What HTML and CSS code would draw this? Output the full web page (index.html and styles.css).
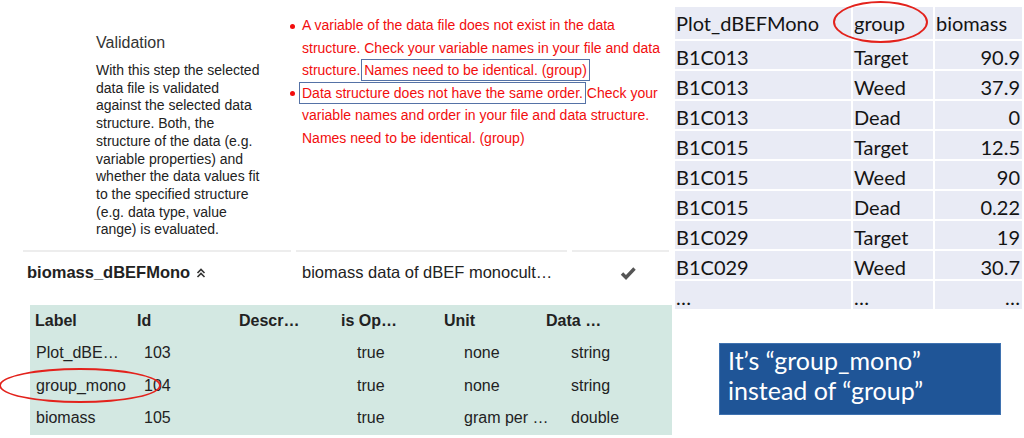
FILE: index.html
```html
<!DOCTYPE html>
<html lang="en">
<head>
<meta charset="utf-8">
<title>Validation</title>
<link rel="stylesheet" href="styles.css">
</head>
<body>
<div class="slide">
  <section class="webpage">
    <div class="validation">
      <div class="step-info">
        <h2 class="step-title">Validation</h2>
        <p class="step-text">With this step the selected data file is validated against the selected data structure. Both, the structure of the data (e.g. variable properties) and whether the data values fit to the specified structure (e.g. data type, value range) is evaluated.</p>
      </div>
      <ul class="errors">
        <li>A variable of the data file does not exist in the data structure. Check your variable names in your file and data structure. <span class="mark">Names need to be identical. (group)</span></li>
        <li><span class="mark">Data structure does not have the same order.</span> Check your variable names and order in your file and data structure. Names need to be identical. (group)</li>
      </ul>
    </div>
    <div class="dataset-row">
      <div class="cell name">biomass_dBEFMono
        <svg class="chev" width="10" height="10" viewBox="0 0 10 10"><polyline points="1.5,5 5,1.5 8.5,5" /><polyline points="1.5,9 5,5.5 8.5,9" /></svg>
      </div>
      <div class="cell desc">biomass data of dBEF monocult…</div>
      <div class="cell status">
        <svg class="check" width="16" height="14" viewBox="0 0 16 14"><polyline points="2,7.5 6,11.5 14.5,2.5" /></svg>
      </div>
    </div>
    <div class="vars">
      <div class="vars-grid">
        <div class="vh">Label</div>
        <div class="vh">Id</div>
        <div class="vh">Descr…</div>
        <div class="vh">is Op…</div>
        <div class="vh">Unit</div>
        <div class="vh">Data …</div>

        <div class="vc c1">Plot_dBE…</div>
        <div class="vc c2">103</div>
        <div class="vc c3"></div>
        <div class="vc c4">true</div>
        <div class="vc c5">none</div>
        <div class="vc c6">string</div>

        <div class="vc c1">group_mono</div>
        <div class="vc c2">104</div>
        <div class="vc c3"></div>
        <div class="vc c4">true</div>
        <div class="vc c5">none</div>
        <div class="vc c6">string</div>

        <div class="vc c1">biomass</div>
        <div class="vc c2">105</div>
        <div class="vc c3"></div>
        <div class="vc c4">true</div>
        <div class="vc c5">gram per …</div>
        <div class="vc c6">double</div>
      </div>
      <div class="oval oval-var"></div>
    </div>
  </section>
  <aside class="excel-side">
    <div class="sheet">
      <div class="sc">Plot_dBEFMono</div><div class="sc">group</div><div class="sc">biomass</div>
      <div class="sc">B1C013</div><div class="sc">Target</div><div class="sc num">90.9</div>
      <div class="sc">B1C013</div><div class="sc">Weed</div><div class="sc num">37.9</div>
      <div class="sc">B1C013</div><div class="sc">Dead</div><div class="sc num">0</div>
      <div class="sc">B1C015</div><div class="sc">Target</div><div class="sc num">12.5</div>
      <div class="sc">B1C015</div><div class="sc">Weed</div><div class="sc num">90</div>
      <div class="sc">B1C015</div><div class="sc">Dead</div><div class="sc num">0.22</div>
      <div class="sc">B1C029</div><div class="sc">Target</div><div class="sc num">19</div>
      <div class="sc">B1C029</div><div class="sc">Weed</div><div class="sc num">30.7</div>
      <div class="sc">…</div><div class="sc">…</div><div class="sc num">…</div>
      <div class="oval oval-group"></div>
    </div>
    <div class="callout">It’s “group_mono”<br>instead of “group”</div>
  </aside>
</div>
</body>
</html>
```

FILE: styles.css
```css
* { box-sizing: border-box; }

html, body {
  margin: 0;
  padding: 0;
  background: #fff;
}

body {
  width: 1024px;
  height: 438px;
  overflow: hidden;
  font-family: "Liberation Sans", Arial, sans-serif;
  color: #222;
}

.slide {
  display: grid;
  grid-template-columns: 673px 351px;
  height: 438px;
}

/* ---------- web page part ---------- */
.webpage {
  position: relative;
}

.validation {
  display: grid;
  grid-template-columns: 290px 383px;
  height: 250px;
}

.step-info {
  padding: 33px 0 0 96px;
}

.step-title {
  margin: 0 0 9px;
  font-size: 16px;
  font-weight: normal;
  line-height: 20px;
  color: #333;
}

.step-text {
  margin: 0;
  width: 168px;
  font-size: 14px;
  line-height: 17.7px;
  color: #222;
}

.errors {
  list-style: none;
  margin: 0;
  padding: 14px 0 0 12px;
  width: 380px;
  font-size: 14px;
  line-height: 22.5px;
  color: #f20d0d;
}

.errors li::before {
  content: "";
  display: inline-block;
  width: 5px;
  height: 5px;
  border-radius: 50%;
  background: #f20d0d;
  margin-left: -12px;
  margin-right: 7px;
  vertical-align: middle;
}

.mark {
  outline: 1.5px solid #5572a6;
  outline-offset: 2px;
}

.dataset-row {
  display: grid;
  grid-template-columns: 268px 271px 97px;
  column-gap: 5px;
  margin-left: 23px;
  height: 44px;
}

.cell {
  border-top: 2px solid #ededed;
  display: flex;
  align-items: center;
  font-size: 16.5px;
  color: #222;
  padding-bottom: 1px;
}

.name {
  font-weight: bold;
  padding-left: 4px;
  gap: 6px;
}

.chev polyline {
  fill: none;
  stroke: #333;
  stroke-width: 1.6;
}

.desc {
  padding-left: 6px;
}

.status {
  padding-left: 48px;
}

.check polyline {
  fill: none;
  stroke: #555;
  stroke-width: 3.4;
}

.vars {
  position: relative;
  margin: 11px 0 0 30px;
  width: 642px;
}

.vars-grid {
  display: grid;
  grid-template-columns: 102px 102px 102px 103px 102px 1fr;
  grid-template-rows: 32px repeat(3, 32.5px);
  background: #d3e8e2;
  font-size: 16px;
  color: #222;
}

.vh, .vc {
  display: flex;
  align-items: center;
  padding-left: 5px;
  white-space: nowrap;
}

.vh {
  font-weight: bold;
}

.c1 { padding-left: 6px; }
.c2 { padding-left: 12px; }
.c4 { padding-left: 21px; }
.c5 { padding-left: 25px; }
.c6 { padding-left: 30px; }

.oval {
  position: absolute;
  border: 2.5px solid #e3221c;
  border-radius: 50%;
}

.oval-var {
  left: -31px;
  top: 63px;
  width: 162px;
  height: 35px;
}

/* ---------- spreadsheet part ---------- */
.excel-side {
  padding: 7px 0 0 2px;
}

.sheet {
  position: relative;
  width: 347px;
  display: grid;
  grid-template-columns: 176px 80px 1fr;
  grid-template-rows: 32px repeat(9, 28px);
  gap: 2px;
  background: #fff;
  font-family: Lato, "Open Sans", sans-serif;
  font-size: 20px;
  color: #141414;
}

.sc {
  background: #e9ebf5;
  padding: 4px 2px 0 1px;
  line-height: 24px;
  white-space: nowrap;
}

.num {
  text-align: right;
}

.oval-group {
  left: 158px;
  top: -6px;
  width: 95px;
  height: 42px;
}

.callout {
  margin: 34px 0 0 44px;
  width: 282px;
  height: 72px;
  background: #1f5597;
  border: 1px solid #3f72b0;
  color: #fff;
  font-family: Lato, "Open Sans", sans-serif;
  font-size: 25px;
  line-height: 30px;
  padding: 1px 0 0 8px;
}
```
